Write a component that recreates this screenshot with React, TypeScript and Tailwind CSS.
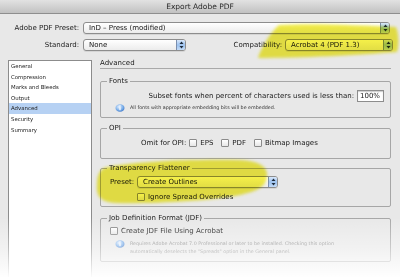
import React from "react";

function Arrows() {
  return (
    <svg width="5" height="8" viewBox="0 0 5 8">
      <path d="M2.5 0.5 L4.5 3 L0.5 3 Z" fill="#1d2a3a" />
      <path d="M2.5 7.5 L4.5 5 L0.5 5 Z" fill="#1d2a3a" />
    </svg>
  );
}

function Popup({ cls, text }: { cls: string; text: string }) {
  return (
    <div
      className={`flex h-[12px] items-stretch overflow-hidden rounded-[3px] border border-[#8d8d8d] bg-linear-to-b from-white to-[#ececec] shadow-[0_1px_0_rgba(0,0,0,0.08)] ${cls}`}
    >
      <span className="flex-1 truncate pl-[5px] text-[7px] leading-[10px] text-[#151515]">{text}</span>
      <span className="flex w-[9px] items-center justify-center border-l border-[#7b8fae] bg-linear-to-b from-[#d9e8fb] via-[#9cc2ef] to-[#c3dbf7]">
        <Arrows />
      </span>
    </div>
  );
}

function Check() {
  return (
    <span className="inline-block h-[8px] w-[8px] shrink-0 rounded-[1px] border border-[#8a8a8a] bg-linear-to-b from-white to-[#e6e6e6]" />
  );
}

function Info() {
  return (
    <svg width="10" height="8" viewBox="0 0 10 8" className="shrink-0">
      <defs>
        <radialGradient id="ig" cx="0.4" cy="0.35" r="0.7">
          <stop offset="0" stopColor="#e6f1ff" />
          <stop offset="0.6" stopColor="#7fb1ea" />
          <stop offset="1" stopColor="#3f78c8" />
        </radialGradient>
      </defs>
      <ellipse cx="5" cy="4" rx="4.5" ry="3.8" fill="url(#ig)" />
      <rect x="4.4" y="3.2" width="1.2" height="3" fill="#fff" />
      <rect x="4.4" y="1.4" width="1.2" height="1.1" fill="#fff" />
    </svg>
  );
}

const items = ["General", "Compression", "Marks and Bleeds", "Output", "Advanced", "Security", "Summary"];

export default function App() {
  return (
    <div className="relative h-[277px] w-[400px] overflow-hidden bg-[#e8e8e8] font-['DejaVu_Sans',sans-serif] text-[#1a1a1a]">
      {/* title bar */}
      <div className="flex h-[14px] items-center justify-center border-b border-[#8e8e8e] bg-linear-to-b from-[#e2e2e2] to-[#c1c1c1] text-[7.5px] leading-[13px] text-[#2a2a2a]">
        Export Adobe PDF
      </div>

      {/* top rows */}
      <div className="flex flex-col gap-[5px] pt-[8px]">
        <div className="flex items-center">
          <span className="w-[79px] text-right text-[7px] leading-[12px]">Adobe PDF Preset:</span>
          <Popup cls="ml-[4px] w-[307px]" text="InD – Press (modified)" />
        </div>
        <div className="flex items-center">
          <span className="w-[79px] text-right text-[7px] leading-[12px]">Standard:</span>
          <Popup cls="ml-[4px] w-[103px]" text="None" />
          <span className="w-[96px] text-right text-[7px] leading-[12px]">Compatibility:</span>
          <Popup cls="ml-[3px] w-[108px]" text="Acrobat 4 (PDF 1.3)" />
        </div>
      </div>

      {/* main */}
      <div className="mt-[9px] flex pl-[8px]">
        <div className="h-[230px] w-[84px] border border-[#8c8c8c] bg-white">
          {items.map((it) => (
            <div
              key={it}
              className={`h-[10.6px] pl-[2px] text-[5.4px] leading-[10.6px] text-[#222] ${
                it === "Advanced" ? "bg-[#b6d1f3]" : ""
              }`}
            >
              {it}
            </div>
          ))}
        </div>

        <div className="ml-[8px] w-[291px]">
          <div className="h-[9px] border-b border-[#a9a9a9] text-[7px] leading-[7px]">Advanced</div>

          {/* Fonts */}
          <fieldset className="mt-[7px] rounded-[2px] border border-[#a6a6a6] pb-[5px]">
            <legend className="ml-[6px] px-[2px] text-[7px] leading-[10px]">Fonts</legend>
            <div className="mt-[4px] flex h-[12px] items-center justify-end pr-[6px]">
              <span className="text-[7px] leading-[12px]">Subset fonts when percent of characters used is less than:</span>
              <span className="ml-[3px] flex h-[12px] w-[27px] items-center border border-[#8d8d8d] bg-white pl-[2px] text-[7px] shadow-[inset_0_1px_1px_rgba(0,0,0,0.2)]">
                100%
              </span>
            </div>
            <div className="mt-[2px] flex h-[8px] items-center pl-[14px]">
              <Info />
              <span className="ml-[5px] text-[4.8px] leading-[8px] text-[#333]">
                All fonts with appropriate embedding bits will be embedded.
              </span>
            </div>
          </fieldset>

          {/* OPI */}
          <fieldset className="mt-[5px] rounded-[2px] border border-[#a6a6a6] pb-[10px]">
            <legend className="ml-[6px] px-[2px] text-[7px] leading-[10px]">OPI</legend>
            <div className="mt-[5px] flex h-[10px] items-center pl-[40px] text-[7px] leading-[10px]">
              <span>Omit for OPI:</span>
              <span className="ml-[3px] flex items-center"><Check /><span className="ml-[3px]">EPS</span></span>
              <span className="ml-[8px] flex items-center"><Check /><span className="ml-[3px]">PDF</span></span>
              <span className="ml-[8px] flex items-center"><Check /><span className="ml-[3px]">Bitmap Images</span></span>
            </div>
          </fieldset>

          {/* Transparency Flattener */}
          <fieldset className="mt-[4px] rounded-[2px] border border-[#a6a6a6] pb-[4px]">
            <legend className="ml-[6px] px-[2px] text-[7px] leading-[10px]">Transparency Flattener</legend>
            <div className="mt-[3px] flex h-[12px] items-center pl-[9px]">
              <span className="w-[27px] text-[7px] leading-[12px]">Preset:</span>
              <Popup cls="w-[141px]" text="Create Outlines" />
            </div>
            <div className="mt-[4px] flex h-[10px] items-center pl-[36px] text-[7px] leading-[10px]">
              <Check />
              <span className="ml-[3px]">Ignore Spread Overrides</span>
            </div>
          </fieldset>

          {/* JDF */}
          <fieldset className="mt-[6px] rounded-[2px] border border-[#a6a6a6] pb-[5px]">
            <legend className="ml-[6px] px-[2px] text-[7px] leading-[10px]">Job Definition Format (JDF)</legend>
            <div className="mt-[3px] flex h-[10px] items-center pl-[9px] text-[7px] leading-[10px]">
              <Check />
              <span className="ml-[3px]">Create JDF File Using Acrobat</span>
            </div>
            <div className="mt-[4px] flex pl-[14px]">
              <Info />
              <span className="ml-[5px] text-[4.8px] leading-[8px] text-[#8a8a8a]">
                Requires Adobe Acrobat 7.0 Professional or later to be installed. Checking this option
                <br />
                automatically deselects the "Spreads" option in the General panel.
              </span>
            </div>
          </fieldset>
        </div>
      </div>

      {/* highlighter strokes */}
      <svg className="pointer-events-none absolute inset-0 mix-blend-multiply" width="400" height="277" viewBox="0 0 400 277">
        <defs>
          <filter id="bl" x="-10%" y="-30%" width="120%" height="160%">
            <feGaussianBlur stdDeviation="1.6" />
          </filter>
        </defs>
        <path
          d="M279 25 C310 23 360 25 396 27 C399 35 399 45 397 52 C360 55 300 58 258 58 C261 48 270 33 279 25 Z"
          fill="#f4ee2a"
          opacity="0.85"
          filter="url(#bl)"
        />
        <path
          d="M104 168 C130 162 180 159 240 160 C258 161 268 166 267 176 C266 185 262 190 240 195 C210 201 150 204 115 203 C100 202 96 195 97 185 C97 176 99 171 104 168 Z"
          fill="#f4ee2a"
          opacity="0.85"
          filter="url(#bl)"
        />
      </svg>

      {/* bottom fade */}
      <div className="pointer-events-none absolute bottom-0 left-0 right-0 h-[60px] bg-linear-to-b from-[rgba(255,255,255,0)] via-[rgba(255,255,255,0.4)] to-[rgba(255,255,255,0.97)]" />
    </div>
  );
}
